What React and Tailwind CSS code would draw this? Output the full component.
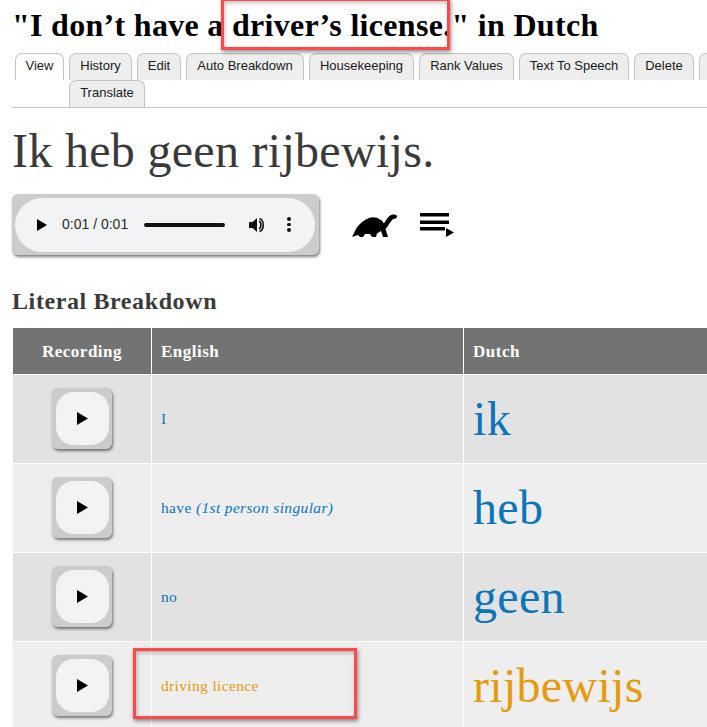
const TABS = [
  { label: 'View', width: 'w-[49px]', active: true },
  { label: 'History', width: 'w-[63px]' },
  { label: 'Edit', width: 'w-[44px]' },
  { label: 'Auto Breakdown', width: 'w-[118px]' },
  { label: 'Housekeeping', width: 'w-[105px]' },
  { label: 'Rank Values', width: 'w-[95px]' },
  { label: 'Text To Speech', width: 'w-[110px]' },
  { label: 'Delete', width: 'w-[60px]' },
  { label: '', width: 'w-[60px]' },
];

const ROWS = [
  { en: 'I', nl: 'ik', bg: 'bg-[#e2e2e2]', color: 'text-[#0a76b7]' },
  { en: 'have', note: '(1st person singular)', nl: 'heb', bg: 'bg-[#eeeeee]', color: 'text-[#0a76b7]' },
  { en: 'no', nl: 'geen', bg: 'bg-[#e2e2e2]', color: 'text-[#0a76b7]' },
  { en: 'driving licence', nl: 'rijbewijs', bg: 'bg-[#eeeeee]', color: 'text-[#e69b0c]' },
];

function Tab({ label, width, active }) {
  return (
    <div
      className={`${width} h-[27px] pb-[3px] shrink-0 rounded-t-[7px] border border-b-0 border-[#c4c4c4] flex items-center justify-center text-[13px] text-[#1a1a1a] ${active ? 'bg-white' : 'bg-[#eeeeee]'}`}
    >
      {label}
    </div>
  );
}

function PlayIcon({ className }) {
  return (
    <svg viewBox="0 0 11 13" className={className}>
      <path d="M0 0 L11 6.5 L0 13 Z" fill="#000" />
    </svg>
  );
}

function Turtle() {
  return (
    <svg viewBox="0 0 46 24" className="w-[46px] h-[24px]">
      <path
        d="M0 23 L4.500 14 C8 9.500 12 6 17 4 C21 2.500 25 3.500 28 5.500 C30 6.500 31 8 32 9.500 C33.500 7 35 4 38 1.500 C40 0 44 0 45 2 C45.500 3.500 43.500 5 41 5 C39 7 38 9 37 10 C36 12 35 13.500 33.500 15 L36 23 L31 23 L29 17 L25 19.500 L24 23 L20 23 L18 20 L13 20 L11 23 L8 23 L6 21 Z"
        fill="#000"
      />
    </svg>
  );
}

function QueueIcon() {
  return (
    <svg viewBox="0 0 34 24" className="w-[34px] h-[24px]">
      <rect x="0" y="0" width="29" height="3.500" fill="#000" />
      <rect x="0" y="7.500" width="29" height="3.500" fill="#000" />
      <rect x="0" y="14" width="25" height="3.500" fill="#000" />
      <path d="M26 15 L34 19.500 L26 24 Z" fill="#000" />
    </svg>
  );
}

function AudioPlayer() {
  return (
    <div className="w-[307px] h-[61px] rounded-[6px] bg-[#cccccc] shadow-[1px_2px_3px_rgba(0,0,0,0.5)] flex items-center pl-[3px]">
      <div className="w-[300px] h-[54px] rounded-[27px] bg-[#f1f3f4] flex items-center pl-[22px] text-[14px] text-[#2a2a2a]">
        <PlayIcon className="w-[10px] h-[12px]" />
        <span className="ml-[15px] w-[66px] whitespace-nowrap">0:01 / 0:01</span>
        <div className="ml-[16px] w-[81px] h-[4px] rounded-full bg-[#111111]" />
        <svg viewBox="0 0 16 16" className="ml-[24px] w-[16px] h-[16px]">
          <path d="M0 5 H3.500 L8 1 V15 L3.500 11 H0 Z" fill="#111" />
          <path d="M10 4 C12.500 5 12.500 11 10 12 M10.500 1.500 C15.500 3.500 15.500 12.500 10.500 14.500" fill="none" stroke="#111" strokeWidth="1.600" />
        </svg>
        <div className="ml-[22px] flex flex-col gap-[2px]">
          <span className="w-[3.500px] h-[3.500px] rounded-full bg-[#111111]" />
          <span className="w-[3.500px] h-[3.500px] rounded-full bg-[#111111]" />
          <span className="w-[3.500px] h-[3.500px] rounded-full bg-[#111111]" />
        </div>
      </div>
    </div>
  );
}

function RecordButton() {
  return (
    <div className="mb-[2px] w-[60px] h-[61px] rounded-[6px] bg-[#cccccc] shadow-[1px_2px_3px_rgba(0,0,0,0.5)] flex items-center justify-center">
      <div className="w-[53px] h-[53px] rounded-[18px] bg-[#f1f3f4] flex items-center justify-center">
        <PlayIcon className="w-[11px] h-[13px]" />
      </div>
    </div>
  );
}

export default function App() {
  return (
    <div className="relative w-[707px] h-[727px] overflow-hidden bg-white font-['Liberation_Sans',sans-serif]">
      <div className="pt-[8px] pl-[12px]">
        <h1 className="h-[45px] font-['Liberation_Serif',serif] font-bold text-[32px] tracking-[0.3px] leading-[34px] text-black whitespace-nowrap">
          "I don’t have a driver’s license." in Dutch
        </h1>

        {/* tabs wrap onto a second row */}
        <div className="border-b border-[#c4c4c4]">
          <div className="flex gap-[5px] pl-[3px]">
            {TABS.map((t, i) => (
              <Tab key={i} {...t} />
            ))}
          </div>
          <div className="flex pl-[57px]">
            <Tab label="Translate" width="w-[76px]" />
          </div>
        </div>

        <div className="mt-[17px] h-[52px] font-['Liberation_Serif',serif] text-[48px] leading-[52px] text-[#3a3a3a] whitespace-nowrap tracking-[0.3px]">
          Ik heb geen rijbewijs.
        </div>

        <div className="mt-[17px] flex items-center">
          <AudioPlayer />
          <div className="ml-[33px] mt-[3px]">
            <Turtle />
          </div>
          <div className="ml-[22px] mt-[1px]">
            <QueueIcon />
          </div>
        </div>

        <h2 className="mt-[33px] h-[26px] font-['Liberation_Serif',serif] font-bold text-[24px] tracking-[0.6px] leading-[26px] text-[#3a3a3a]">
          Literal Breakdown
        </h2>
      </div>

      <div className="mt-[14px] ml-[13px] w-[760px] font-['Liberation_Serif',serif]">
        <div className="flex gap-px h-[46px] pt-0 font-bold text-[17px] tracking-[0.5px] text-white">
          <div className="w-[138px] pt-[2px] bg-[#737373] flex items-center justify-center">Recording</div>
          <div className="w-[311px] pt-[2px] bg-[#737373] flex items-center pl-[9px]">English</div>
          <div className="flex-1 pt-[2px] bg-[#737373] flex items-center pl-[9px]">Dutch</div>
        </div>
        {ROWS.map((row) => (
          <div key={row.nl} className={`flex gap-px h-[88px] mt-px ${row.color}`}>
            <div className={`w-[138px] ${row.bg} flex items-center justify-center`}>
              <RecordButton />
            </div>
            <div className={`w-[311px] ${row.bg} flex items-center pl-[9px] text-[15.500px] tracking-[0.35px]`}>
              <span>
                {row.en} {row.note && <em>{row.note}</em>}
              </span>
            </div>
            <div className={`flex-1 ${row.bg} flex items-center pl-[9px] text-[48px] tracking-[0.3px]`}>{row.nl}</div>
          </div>
        ))}
      </div>

      {/* annotation boxes drawn on top of the screenshot */}
      <div className="absolute left-[221px] top-[-2px] w-[229px] h-[52px] border-[3px] border-[#ff4848] shadow-[1px_2px_4px_rgba(0,0,0,0.45),inset_1px_2px_4px_rgba(0,0,0,0.25)]" />
      <div className="absolute left-[133px] top-[648px] w-[224px] h-[71px] border-[3px] border-[#ff4848] shadow-[1px_2px_4px_rgba(0,0,0,0.45),inset_1px_2px_4px_rgba(0,0,0,0.25)]" />
    </div>
  );
}
